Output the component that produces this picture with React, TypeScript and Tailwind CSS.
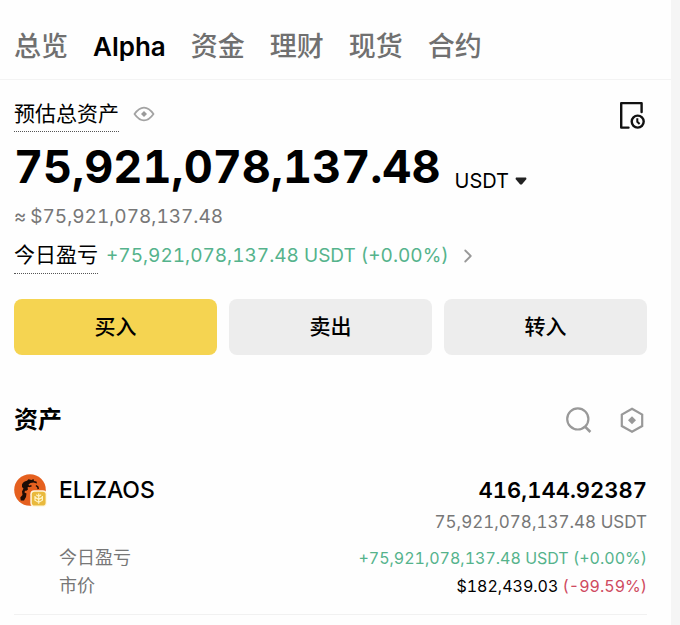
import { ChevronRight } from "lucide-react";

const tabs = ["总览", "Alpha", "资金", "理财", "现货", "合约"];

const actions = [
  { label: "买入", primary: true },
  { label: "卖出", primary: false },
  { label: "转入", primary: false },
];

function EyeIcon() {
  return (
    <svg width="22" height="16" viewBox="0 0 22 16" fill="none">
      <path
        d="M1.5 8 Q6 1.6 11 1.6 Q16 1.6 20.5 8 Q16 14.4 11 14.4 Q6 14.4 1.5 8Z"
        stroke="#a3a3a3"
        strokeWidth="1.8"
        strokeLinejoin="round"
      />
      <path d="M11 5 L14 8 L11 11 L8 8Z" fill="#999" />
    </svg>
  );
}

function HistoryIcon() {
  return (
    <svg width="28" height="28" viewBox="0 0 28 28" fill="none" stroke="#111" strokeWidth="2.4">
      <path d="M9.5 26.6H2.2V2.1H22.6V11" strokeLinejoin="round" strokeLinecap="round" />
      <circle cx="18.7" cy="20.6" r="6" />
      <path d="M18.3 17.2V20.8L20.6 23" strokeWidth="2" />
    </svg>
  );
}

function SearchIcon() {
  return (
    <svg width="28" height="28" viewBox="0 0 28 28" fill="none" stroke="#999" strokeWidth="2.2">
      <circle cx="12.8" cy="12.9" r="10.6" />
      <path d="M20.3 20.8L25.4 26" strokeWidth="2.6" />
    </svg>
  );
}

function HexIcon() {
  return (
    <svg width="26" height="28" viewBox="0 0 26 28" fill="none">
      <path d="M13 2.8L23.2 8.6V20L13 25.8L2.8 20V8.6Z" stroke="#999" strokeWidth="2.2" />
      <path d="M13 10.2L17 14.2L13 18.2L9 14.2Z" fill="#999" />
    </svg>
  );
}

function TokenLogo() {
  return (
    <svg width="33" height="33" viewBox="0 0 33 33">
      <circle cx="16" cy="16" r="15.8" fill="#e5601f" />
      <path
        d="M8 10.5C9 8.5 10.5 7 13 6.8L14.5 5.2L17.5 6L19.5 5L20 7L22.5 7.5L23 9.5L19.5 8.5L16.5 9L14.5 10.5L15.5 12.5L13.5 13.5L14 15.5L12 17L11 16.5L10.5 18.5L12.5 19.5L12 23L10 26.5L6.8 26.5L6.3 23.5L8.5 21L8 17.5L9.5 14.5L8 13Z"
        fill="#1d0d06"
      />
      <path d="M15 12.5L17.5 11.8M22 11.5L23.8 13L24.3 15" stroke="#1d0d06" strokeWidth="1.5" fill="none" />
      <rect x="16.3" y="16.3" width="16.4" height="16.4" rx="4" fill="#fff6dc" />
      <rect x="17.8" y="17.8" width="13.8" height="13.8" rx="2.8" fill="#e9b93c" />
      <path
        d="M24.7 19.6V29.8M21 22V26.2L24.7 28.4L28.4 26.2V22M22.2 20.8L24.7 22.4L27.2 20.8M21 23.4L24.7 25.4L28.4 23.4"
        stroke="#fff3c4"
        strokeWidth="1.2"
        fill="none"
      />
    </svg>
  );
}

export default function App() {
  return (
    <div className="min-h-screen border-r-[9px] border-[#f5f5f5] bg-[#fefefe] font-['Inter','Noto_Sans_CJK_SC',sans-serif] text-black tabular-nums">
      <nav className="flex h-20 items-center gap-[25px] border-b border-[#f3f3f3] px-3.5 pt-3.5 text-[27px] leading-9 font-medium text-[#707070]">
        {tabs.map((tab) => (
          <a
            key={tab}
            href="#"
            className={tab === "Alpha" ? "text-[26px] font-semibold text-black" : ""}
          >
            {tab}
          </a>
        ))}
      </nav>

      <main className="pr-6 pl-3.5">
        <section>
          <div className="flex items-start justify-between pt-4">
            <div className="flex items-center gap-3.5">
              <h2 className="border-b border-dotted border-[#555] pt-1 pb-[3px] text-[21px] leading-7 font-normal">
                预估总资产
              </h2>
              <button type="button" aria-label="隐藏资产">
                <EyeIcon />
              </button>
            </div>
            <button type="button" aria-label="历史记录" className="pt-[5px]">
              <HistoryIcon />
            </button>
          </div>

          <div className="flex items-end gap-3.5 pb-0.5">
            <span className="text-[45px] leading-[69px] font-bold">75,921,078,137.48</span>
            <button type="button" className="flex items-center gap-1.5 pb-2 text-xl leading-6">
              USDT
              <svg width="12" height="8" viewBox="0 0 12 8">
                <path d="M1 0.5H11L11.5 2L6.8 7.4H5.2L0.5 2Z" fill="#222" />
              </svg>
            </button>
          </div>

          <p className="flex items-center gap-1 text-[19px] leading-7 text-[#777]">
            <span>≈</span>
            $75,921,078,137.48
          </p>

          <div className="flex items-center gap-2 pt-1.5">
            <span className="border-b border-dotted border-[#555] pt-1 pb-1 text-[21px] leading-7">
              今日盈亏
            </span>
            <a href="#" className="flex items-center gap-2 text-[19px] leading-7 text-[#55b38c]">
              +75,921,078,137.48 USDT (+0.00%)
              <ChevronRight size={22} strokeWidth={2} color="#999" />
            </a>
          </div>

          <div className="grid grid-cols-3 gap-3 pt-[25px]">
            {actions.map((action) => (
              <button
                key={action.label}
                type="button"
                className={`h-14 rounded-lg text-[21px] font-medium ${
                  action.primary ? "bg-[#f5d451]" : "bg-[#ededed]"
                }`}
              >
                {action.label}
              </button>
            ))}
          </div>
        </section>

        <section className="pt-[49px]">
          <div className="flex items-center justify-between">
            <h2 className="text-[24px] leading-8 font-semibold">资产</h2>
            <div className="flex items-center gap-[26px] pr-0.5">
              <button type="button" aria-label="搜索">
                <SearchIcon />
              </button>
              <button type="button" aria-label="设置">
                <HexIcon />
              </button>
            </div>
          </div>

          <article className="flex gap-3 border-b border-[#f1f1f1] pt-9 pb-3.5">
            <div className="pt-0.5">
              <TokenLogo />
            </div>
            <div className="flex-1">
              <div className="flex items-center justify-between leading-9">
                <h3 className="text-[23px] font-medium">ELIZAOS</h3>
                <span className="text-[22px] font-semibold">416,144.92387</span>
              </div>
              <p className="text-right text-[17px] leading-7 text-[#777]">75,921,078,137.48 USDT</p>
              <dl className="pt-2 text-base leading-7">
                <div className="flex justify-between">
                  <dt className="text-lg leading-7 text-[#777]">今日盈亏</dt>
                  <dd className="text-[#55b38c]">+75,921,078,137.48 USDT (+0.00%)</dd>
                </div>
                <div className="flex justify-between">
                  <dt className="text-lg leading-7 text-[#777]">市价</dt>
                  <dd>
                    $182,439.03 <span className="text-[#cf4a60]">(-99.59%)</span>
                  </dd>
                </div>
              </dl>
            </div>
          </article>
        </section>
      </main>
    </div>
  );
}
